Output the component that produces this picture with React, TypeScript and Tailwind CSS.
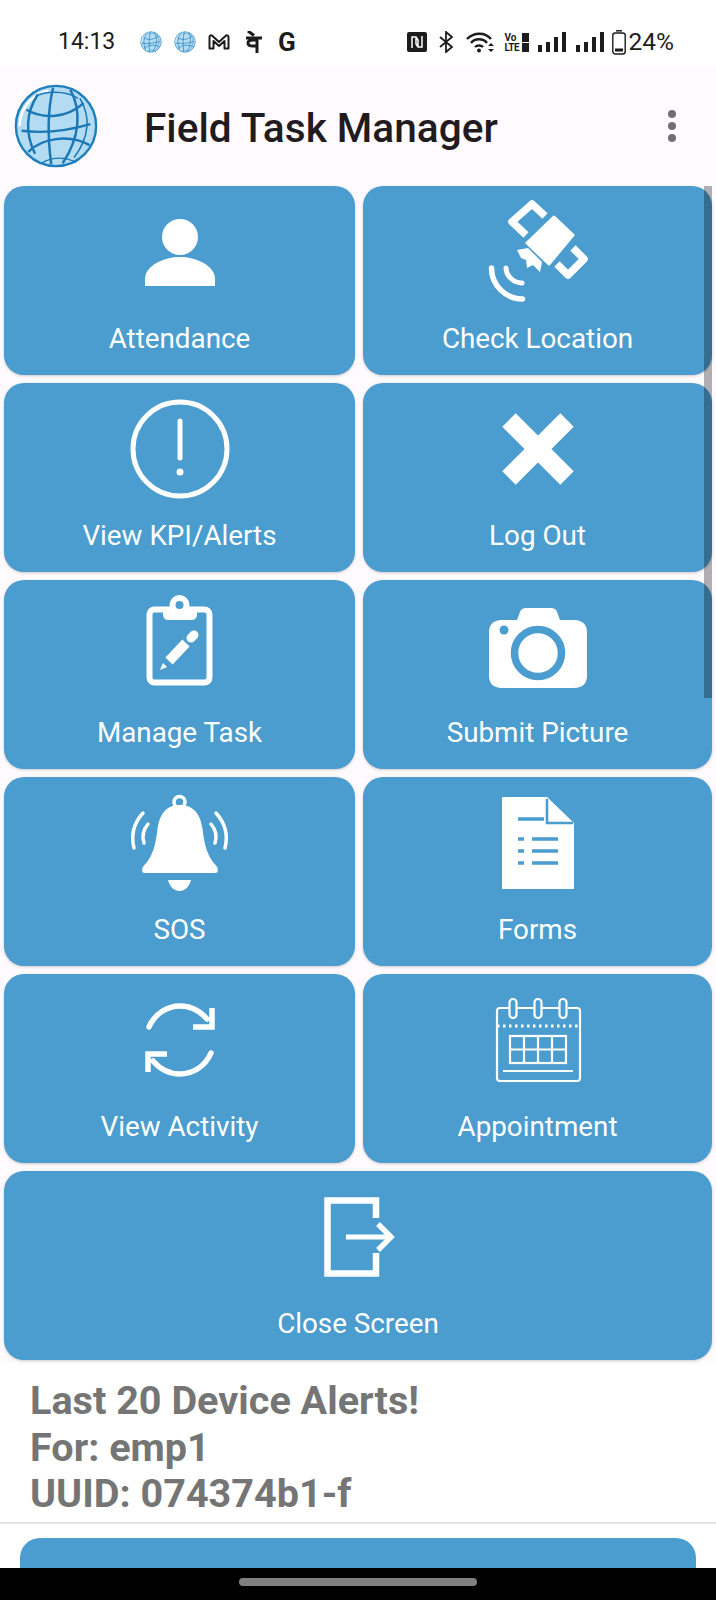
import React from "react";

const Globe = ({ small }: { small?: boolean }) => (
  <svg viewBox="0 0 90 90" className={small ? "w-[22px] h-[22px]" : "w-[86px] h-[86px]"}>
    <circle cx="45" cy="45" r="42" fill="#b3dcf3" stroke="#1f7fbb" strokeWidth="2.5" />
    <path d="M7 45a38 38 0 0 1 30-37" fill="none" stroke="#fff" strokeWidth="2.5" />
    <g fill="none" stroke="#1b78b5" strokeWidth="2.6">
      <path d="M14 28c18 10 42 9 60-7" />
      <path d="M9 50c24 3 48 0 72-7" />
      <path d="M16 72c14-14 42-19 64-7" />
      <path d="M30 84c10-7 24-7 36-1" strokeWidth="1.5" />
      <path d="M24 14c8-5 30-7 44 2" strokeWidth="1.5" />
      <path d="M26 12c-12 18-14 40-3 62" />
      <path d="M42 5c-6 24-6 50-2 80" />
      <path d="M60 7c12 22 10 50-8 77" />
      <path d="M70 16c12 20 10 40-6 62" strokeWidth="1.6" />
    </g>
  </svg>
);

const icons: Record<string, React.ReactNode> = {
  person: (
    <>
      <circle cx="50" cy="35" r="18" fill="#fff" />
      <path d="M15 84v-7c0-14 20-22 35-22s35 8 35 22v7z" fill="#fff" />
    </>
  ),
  satellite: (
    <>
      <path d="M38 33 L24 19.700 L44 2 L57 14" fill="none" stroke="#fff" strokeWidth="7.500" strokeLinejoin="round" />
      <path d="M85 46 L96 57 L80 73 L69 62" fill="none" stroke="#fff" strokeWidth="7.500" strokeLinejoin="round" />
      <path d="M66 15 L85 33 L61 62 L39 41z" fill="#fff" stroke="#fff" strokeWidth="3" strokeLinejoin="round" />
      <path d="M29 48 L40 46 L54 60 L52 70 L45 63 L39 66 L38 58 L33 56z" fill="#fff" />
      <path d="M18 66c0 8 8 15 16 15" fill="none" stroke="#fff" strokeWidth="5" strokeLinecap="round" />
      <path d="M3.500 66c0 17 14 31 31 31" fill="none" stroke="#fff" strokeWidth="5.500" strokeLinecap="round" />
    </>
  ),
  alert: (
    <>
      <circle cx="50" cy="50" r="47" fill="none" stroke="#fff" strokeWidth="5" />
      <path d="M50 22v37" stroke="#fff" strokeWidth="5" strokeLinecap="round" />
      <circle cx="50" cy="73" r="3.500" fill="#fff" />
    </>
  ),
  close: <path d="M21 21 L79 79 M79 21 L21 79" stroke="#fff" strokeWidth="19" />,
  clipboard: (
    <>
      <rect x="19.500" y="13.500" width="60" height="73" rx="5" fill="none" stroke="#fff" strokeWidth="6" />
      <path d="M33 11h34v7c0 4-2 6-6 6H39c-4 0-6-2-6-6z" fill="#fff" />
      <circle cx="49.500" cy="9" r="10" fill="#fff" />
      <circle cx="49.500" cy="9" r="4" fill="#4a9dce" />
      <path d="M39 65 L56 47" stroke="#fff" strokeWidth="10" />
      <path d="M61 42 L64 39" stroke="#fff" strokeWidth="9" strokeLinecap="round" />
      <path d="M30 74 L33 67 L37 71z" fill="#fff" />
    </>
  ),
  camera: (
    <>
      <path d="M29 24l3-8c1-3 3-4 6-4h25c3 0 5 1 6 4l3 8h14c9 0 13 5 13 12v44c0 7-4 12-13 12H14C5 92 1 87 1 80V36c0-7 4-12 13-12z" fill="#fff" />
      <circle cx="50" cy="57" r="23.500" fill="none" stroke="#4a9dce" strokeWidth="7.500" />
      <circle cx="16" cy="34" r="4.500" fill="#4a9dce" />
    </>
  ),
  bell: (
    <>
      <circle cx="49.500" cy="9" r="5.500" fill="none" stroke="#fff" strokeWidth="3.500" />
      <path d="M49.500 12c-14 0-20 10-22 24-2 15-4 27-14 37-2 3-2 7 1 7h71c3 0 3-4 1-7-10-10-12-22-14-37-2-14-8-24-23-24z" fill="#fff" />
      <path d="M38 87h23c-2 7-6 11-11.500 11S40 94 38 87z" fill="#fff" />
      <g fill="none" stroke="#fff" strokeLinecap="round" strokeWidth="3.500">
        <path d="M13 20c-10 11-12 23-9 35" />
        <path d="M18 31c-5 6-6 13-4 19" />
        <path d="M86 20c10 11 12 23 9 35" />
        <path d="M81 31c5 6 6 13 4 19" />
      </g>
    </>
  ),
  doc: (
    <>
      <path d="M14 4h45l27 26v66H14z" fill="#fff" />
      <path d="M59 6v24h26" fill="none" stroke="#4a9dce" strokeWidth="2.500" />
      <g stroke="#4a9dce" strokeWidth="3.500">
        <path d="M30 26h26M44 46h26M44 58h26M44 70h26M30 46h6M30 58h6M30 70h6" />
      </g>
    </>
  ),
  sync: (
    <g fill="none" stroke="#fff" strokeWidth="5.500">
      <path d="M19 37c6-14 19-21 31-21 11 0 20 5 27 13" strokeLinecap="round" />
      <path d="M82 18v19H63" />
      <path d="M81 63c-6 14-19 21-31 21-11 0-20-5-27-13" strokeLinecap="round" />
      <path d="M18 82V64h19" />
    </g>
  ),
  calendar: (
    <g fill="none" stroke="#fff" strokeWidth="2.200">
      <path d="M21 18H12c-2 0-3 1-3 3v67c0 2 1 3 3 3h77c2 0 3-1 3-3V21c0-2-1-3-3-3h-9M29 18h17M54 18h17" />
      <rect x="21.500" y="9" width="7" height="19" rx="3.500" />
      <rect x="46.500" y="9" width="7" height="19" rx="3.500" />
      <rect x="71.500" y="9" width="7" height="19" rx="3.500" />
      <path d="M9 36h83" strokeDasharray="2.500 3.500" strokeWidth="3" />
      <rect x="22" y="46" width="56" height="27" />
      <path d="M36 46v27M50 46v27M64 46v27M22 59.500h56" />
      <path d="M15 81h70" />
    </g>
  ),
  exit: (
    <g fill="none" stroke="#fff" strokeWidth="6.500">
      <path d="M68 31V13.500H19.500v73H68V66" />
      <path d="M38 50h44" strokeWidth="5" />
      <path d="M70 37l13 13-13 13" strokeWidth="5.500" />
    </g>
  ),
};

const Tile = ({ label, icon, wide }: { label: string; icon: string; wide?: boolean }) => (
  <div
    className={`${
      wide ? "col-span-2" : ""
    } flex flex-col items-center h-[189px] pt-4 rounded-[20px] bg-[#4a9dce] shadow-[0_1px_3px_rgba(0,0,0,0.2)]`}
  >
    <svg viewBox="0 0 100 100" className="w-[100px] h-[100px] overflow-visible">
      {icons[icon]}
    </svg>
    <span className="mt-[22px] text-[27.8px] leading-[30px] text-white">{label}</span>
  </div>
);

const tiles = [
  { label: "Attendance", icon: "person" },
  { label: "Check Location", icon: "satellite" },
  { label: "View KPI/Alerts", icon: "alert" },
  { label: "Log Out", icon: "close" },
  { label: "Manage Task", icon: "clipboard" },
  { label: "Submit Picture", icon: "camera" },
  { label: "SOS", icon: "bell" },
  { label: "Forms", icon: "doc" },
  { label: "View Activity", icon: "sync" },
  { label: "Appointment", icon: "calendar" },
];

const StatusBar = () => (
  <div className="flex items-center h-[66px] pt-[18px] pl-[58px] bg-white text-[#1c1c1c]">
    <span className="w-[82px] text-[23px] leading-[48px]">14:13</span>
    <Globe small />
    <span className="ml-3">
      <Globe small />
    </span>
    <svg viewBox="0 0 22 16" className="ml-3 w-[22px] h-4">
      <path d="M1.500 14.500V3c0-2 2-2 3-1L11 8l6.500-6c1-1 3-1 3 1v11.500h-4V7L11 12 5.500 7v7.500z" fill="none" stroke="#1c1c1c" strokeWidth="2" strokeLinejoin="round" />
    </svg>
    <svg viewBox="0 0 16 22" className="ml-4 w-4 h-[22px]">
      <path d="M0 7h16M11 7v15M11 9H7C4 9 2 10 2 12s2 3 5 3h4" fill="none" stroke="#1c1c1c" strokeWidth="3" />
      <path d="M2 0l6 4.500" stroke="#1c1c1c" strokeWidth="3" />
    </svg>
    <span className="ml-4 text-[26px] leading-[26px] font-bold">G</span>
    <div className="ml-auto mr-[42px] flex items-center">
      <svg viewBox="0 0 20 20" className="w-5 h-5">
        <rect width="20" height="20" rx="2" fill="#1c1c1c" />
        <path d="M5 16V5h4l2 3v6M15 4v11h-4L9 12V6" fill="none" stroke="#fff" strokeWidth="1.500" />
      </svg>
      <svg viewBox="0 0 15 22" className="ml-3 w-[15px] h-[22px]">
        <path d="M1 6l12 10-6 5V1l6 5L1 16" fill="none" stroke="#1c1c1c" strokeWidth="1.800" />
      </svg>
      <svg viewBox="0 0 29 22" className="ml-3 w-[29px] h-[22px]">
        <path d="M1 8c7-7 18-7 24 0M5 12c4-5 12-5 16 0M9 16c2-2 6-2 8 0" fill="none" stroke="#1c1c1c" strokeWidth="2.400" />
        <circle cx="13" cy="19.500" r="2" fill="#1c1c1c" />
        <path d="M25 12l3 3h-6zM25 21l-3-3h6z" fill="#1c1c1c" />
      </svg>
      <div className="ml-[10px] w-[24px] flex flex-col gap-px text-[10px] leading-[9px] font-bold">
        <div className="flex justify-between items-center">
          <span>Vo</span>
          <span className="w-[7px] h-[9px] bg-[#1c1c1c]" />
        </div>
        <div className="flex justify-between items-center">
          <span className="tracking-[-0.5px]">LTE</span>
          <span className="w-[7px] h-[9px] bg-[#1c1c1c]" />
        </div>
      </div>
      <svg viewBox="0 0 29 20" className="ml-[9px] w-[29px] h-5">
        <path d="M0 13h4v7H0zM8 10h4v10H8zM16 5h4v15h-4zM24 0h4v20h-4z" fill="#1c1c1c" />
      </svg>
      <svg viewBox="0 0 29 20" className="ml-[9px] w-[29px] h-5">
        <path d="M0 13h4v7H0zM8 10h4v10H8zM16 5h4v15h-4zM24 0h4v20h-4z" fill="#1c1c1c" />
      </svg>
      <svg viewBox="0 0 14 25" className="ml-[7px] w-[14px] h-[25px]">
        <path d="M4 .8h6" stroke="#1c1c1c" strokeWidth="1.500" />
        <rect x=".8" y="3" width="12.400" height="21" rx="2.500" fill="none" stroke="#1c1c1c" strokeWidth="1.400" />
        <rect x="3" y="18.500" width="8" height="3" fill="#1c1c1c" />
      </svg>
      <span className="ml-[3px] text-[24.500px] leading-[48px]">24%</span>
    </div>
  </div>
);

export default function App() {
  return (
    <div className="relative h-[1600px] overflow-hidden bg-white font-['Roboto',sans-serif]">
      <StatusBar />
      <div className="flex items-center h-[120px] pl-[13px] pr-[40px] bg-[#fefafe]">
        <Globe />
        <h1 className="ml-[45px] pt-[5px] text-[40.600px] font-medium text-[#1f1b1f]">Field Task Manager</h1>
        <div className="ml-auto flex flex-col gap-1">
          <span className="w-2 h-2 rounded-full bg-[#6f6f72]" />
          <span className="w-2 h-2 rounded-full bg-[#6f6f72]" />
          <span className="w-2 h-2 rounded-full bg-[#6f6f72]" />
        </div>
      </div>
      <div className="grid grid-cols-[351px_349px] gap-2 pl-1 pb-1 bg-[#fefafe]">
        {tiles.map((tile) => (
          <Tile key={tile.label} label={tile.label} icon={tile.icon} />
        ))}
        <Tile label="Close Screen" icon="exit" wide />
      </div>
      <div className="pl-[30px] pt-[14px] h-[160px] border-b-2 border-[#e2e2e2] text-[39.600px] leading-[46.500px] font-bold text-[#757575]">
        <p>Last 20 Device Alerts!</p>
        <p>For: emp1</p>
        <p>UUID: 074374b1-f</p>
      </div>
      <div className="mx-5 mt-[14px] h-[60px] rounded-t-[20px] bg-[#4a9dce]" />
      {/* scrollbar overlay */}
      <div className="absolute left-[704px] top-[186px] w-2 h-[512px] bg-black/30" />
      <div className="absolute inset-x-0 bottom-0 flex justify-center pt-[10px] h-8 bg-black">
        <span className="w-[238px] h-2 rounded-full bg-[#808080]" />
      </div>
    </div>
  );
}
